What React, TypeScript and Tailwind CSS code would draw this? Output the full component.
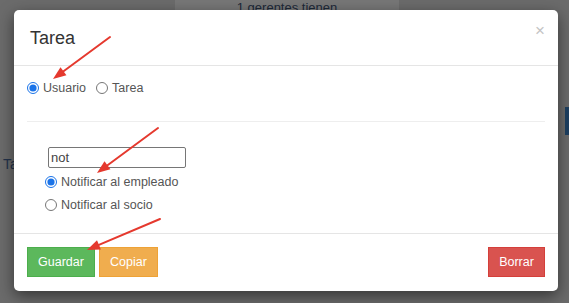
import { useState } from 'react';

const font = { fontFamily: '"Liberation Sans", Arial, sans-serif' };

const Arrow = ({ x1, y1, x2, y2 }: { x1: number; y1: number; x2: number; y2: number }) => {
  const dx = x2 - x1;
  const dy = y2 - y1;
  const len = Math.sqrt(dx * dx + dy * dy);
  const ux = dx / len;
  const uy = dy / len;
  const head = 13;
  const half = 5;
  const bx = x2 - ux * head;
  const by = y2 - uy * head;
  const p1 = `${bx - uy * half},${by + ux * half}`;
  const p2 = `${bx + uy * half},${by - ux * half}`;
  return (
    <g>
      <line x1={x1} y1={y1} x2={bx + ux * 2} y2={by + uy * 2} stroke="#e5392e" strokeWidth="2" strokeLinecap="round" />
      <polygon points={`${x2},${y2} ${p1} ${p2}`} fill="#e5392e" />
    </g>
  );
};

const Radio = ({ checked, label, onChange }: { checked: boolean; label: string; onChange: () => void }) => (
  <label className="flex items-center gap-[4px] text-[12.5px] text-[#555] leading-none">
    <input type="radio" checked={checked} onChange={onChange} className="m-0 h-[12px] w-[12px] accent-[#1a73e8]" />
    <span>{label}</span>
  </label>
);

export default function App() {
  const [tipo, setTipo] = useState('usuario');
  const [notif, setNotif] = useState('empleado');

  return (
    <div className="relative h-[303px] w-[569px] overflow-hidden bg-[#6b6b6b]" style={font}>
      {/* page beneath the backdrop */}
      <div className="flex h-[12px]">
        <div className="w-[175px]" />
        <div className="flex w-[224px] justify-center bg-[#777777] pt-[1px] text-[13px] leading-none text-[#1c2838]">
          1 gerentes tienen
        </div>
      </div>
      <div className="flex">
        <div className="pl-[3px] pt-[142px] text-[14px] text-[#23324a]">Ta</div>
        <div className="flex-1" />
        <div className="mt-[95px] h-[28px] w-[4px] bg-[#1d3f60]" />
      </div>

      {/* modal */}
      <div className="absolute left-[14px] top-[10px] w-[544px] rounded-[5px] bg-white shadow-[0_5px_15px_rgba(0,0,0,0.5)]">
        <div className="flex items-start justify-between border-b border-[#e5e5e5] px-[16px] pb-[14px] pt-[15px]">
          <h4 className="text-[18px] leading-[26px] text-[#333]">Tarea</h4>
          <button className="mr-[-3px] mt-[-3px] text-[17px] font-normal leading-none text-[#c4c4c4]">×</button>
        </div>

        <div className="px-[13px] pt-[13px]">
          <div className="flex h-[18px] items-center gap-[10px]">
            <Radio checked={tipo === 'usuario'} label="Usuario" onChange={() => setTipo('usuario')} />
            <Radio checked={tipo === 'tarea'} label="Tarea" onChange={() => setTipo('tarea')} />
          </div>
          <hr className="mt-[24px] border-t border-[#eeeeee]" />
          <div className="pl-[18px] pt-[23px] pb-[16px]">
            <input
              defaultValue="not"
              className="ml-[3px] box-border h-[21px] w-[138px] rounded-[2px] border border-[#767676] px-[2px] text-[13px] text-[#444] outline-none"
            />
            <div className="flex h-[24px] items-center pt-[2px]">
              <Radio checked={notif === 'empleado'} label="Notificar al empleado" onChange={() => setNotif('empleado')} />
            </div>
            <div className="flex h-[24px] items-center">
              <Radio checked={notif === 'socio'} label="Notificar al socio" onChange={() => setNotif('socio')} />
            </div>
          </div>
        </div>

        <div className="flex items-center justify-between border-t border-[#e5e5e5] px-[13px] pb-[14px] pt-[13px]">
          <div className="flex gap-[4px]">
            <button className="h-[30px] w-[68px] border border-[#4cae4c] bg-[#5cb85c] text-[12.5px] text-white">Guardar</button>
            <button className="h-[30px] w-[59px] border border-[#eea236] bg-[#f0ad4e] text-[12.5px] text-white">Copiar</button>
          </div>
          <button className="h-[30px] w-[57px] border border-[#d43f3a] bg-[#d9534f] text-[12.5px] text-white">Borrar</button>
        </div>
      </div>

      {/* annotation arrows */}
      <svg className="pointer-events-none absolute left-0 top-0" width="569" height="303">
        <Arrow x1={110} y1={37} x2={53} y2={79} />
        <Arrow x1={158} y1={128} x2={97} y2={173} />
        <Arrow x1={160} y1={219} x2={87} y2={250} />
      </svg>
    </div>
  );
}
